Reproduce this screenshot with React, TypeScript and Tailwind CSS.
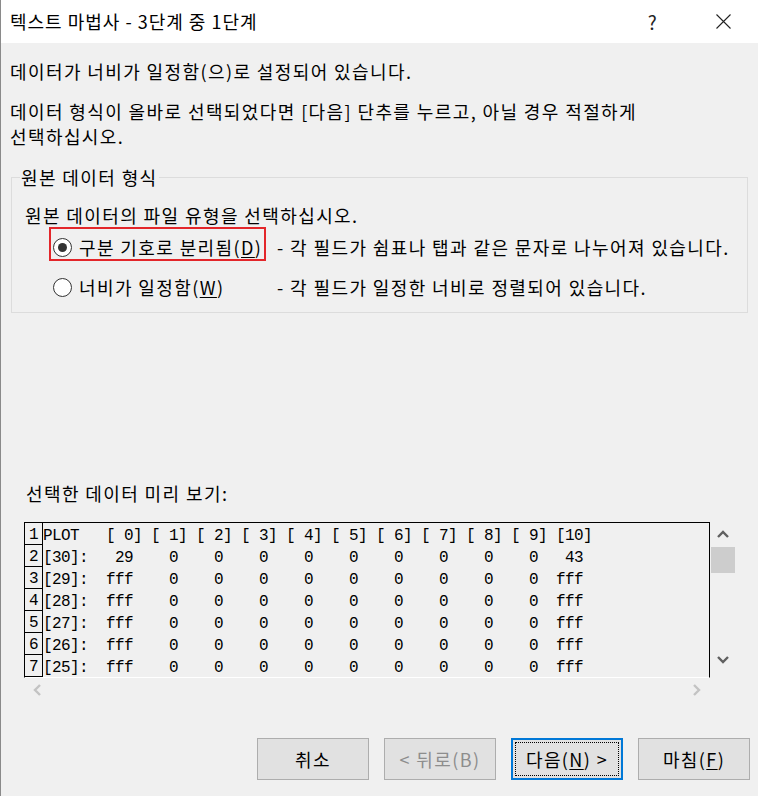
import React from "react";

const zeros = "    0".repeat(9);
const rows = [
  "PLOT   [ 0] [ 1] [ 2] [ 3] [ 4] [ 5] [ 6] [ 7] [ 8] [ 9] [10]",
  "[30]:   29" + zeros + "   43",
  ...[29, 28, 27, 26, 25].map((n) => `[${n}]:  fff` + zeros + "  fff"),
];

function Radio({ checked }: { checked?: boolean }) {
  return (
    <span className="w-[19px] h-[19px] rounded-full border border-[#333] bg-white flex items-center justify-center shrink-0">
      {checked && <span className="w-[9px] h-[9px] rounded-full bg-[#333]" />}
    </span>
  );
}

function Chevron({ dir, color }: { dir: "up" | "down" | "left" | "right"; color: string }) {
  const pts = {
    up: "1,7 6,2 11,7",
    down: "1,2 6,7 11,2",
    left: "7,1 2,6 7,11",
    right: "2,1 7,6 2,11",
  }[dir];
  const vertical = dir === "up" || dir === "down";
  return (
    <svg width={vertical ? 12 : 9} height={vertical ? 9 : 12} viewBox={vertical ? "0 0 12 9" : "0 0 9 12"}>
      <polyline points={pts} fill="none" stroke={color} strokeWidth="2.4" />
    </svg>
  );
}

function Button({ children, primary, disabled }: { children: React.ReactNode; primary?: boolean; disabled?: boolean }) {
  return (
    <div
      className={
        "w-[112px] h-[42px] bg-[#e1e1e1] flex items-center justify-center " +
        (primary ? "border-2 border-[#0078d7] p-[2px]" : "border border-[#adadad]") +
        (disabled ? " text-[#8d8d8d]" : " text-black")
      }
    >
      {primary ? (
        <div className="w-full h-full border border-dotted border-black flex items-center justify-center">{children}</div>
      ) : (
        children
      )}
    </div>
  );
}

export default function App() {
  return (
    <div className="w-[758px] h-[796px] bg-[#f0f0f0] border-l border-[#8a8a8a] flex flex-col overflow-hidden font-['Noto_Sans_CJK_KR',sans-serif] text-[18px] tracking-[1.4px] leading-[25px] text-black">
      {/* Title bar */}
      <div className="h-[43px] bg-white flex items-center pl-[9px] shrink-0">
        <span className="flex-1 tracking-[1px]">텍스트 마법사 - 3단계 중 1단계</span>
        <span className="w-[70px] text-center text-[19px] text-[#222]">?</span>
        <span className="w-[70px] flex justify-center">
          <svg width="15" height="15" viewBox="0 0 15 15">
            <path d="M0.5 0.5 L14.5 14.5 M14.5 0.5 L0.5 14.5" stroke="#222" strokeWidth="1.1" />
          </svg>
        </span>
      </div>

      <div className="pl-[9px] flex flex-col">
        <p className="mt-[16px]">데이터가 너비가 일정함(으)로 설정되어 있습니다.</p>
        <p className="mt-[15px]">
          데이터 형식이 올바로 선택되었다면 [다음] 단추를 누르고, 아닐 경우 적절하게
          <br />
          선택하십시오.
        </p>

        {/* Source data type */}
        <fieldset className="mt-[16px] ml-[1px] mr-[10px] border border-[#dcdcdc] pb-[12px]">
          <legend className="ml-[8px] px-[1px]">원본 데이터 형식</legend>
          <p className="mt-[13px] pl-[13px]">원본 데이터의 파일 유형을 선택하십시오.</p>
          <div className="flex items-center -mt-[1px]">
            <div className="ml-[37px] w-[217px] h-[34px] border-2 border-[#e3262a] pt-[8px] pb-[2px] pl-[2px] flex items-center gap-[7px]">
              <Radio checked />
              <span>
                구분 기호로 분리됨(<span className="underline underline-offset-2">D</span>)
              </span>
            </div>
            <span className="ml-[11px] pt-[6px]">- 각 필드가 쉼표나 탭과 같은 문자로 나누어져 있습니다.</span>
          </div>
          <div className="flex items-center mt-[14px]">
            <div className="ml-[37px] w-[217px] pl-[4px] flex items-center gap-[7px]">
              <Radio />
              <span>
                너비가 일정함(<span className="underline underline-offset-2">W</span>)
              </span>
            </div>
            <span className="ml-[11px]">- 각 필드가 일정한 너비로 정렬되어 있습니다.</span>
          </div>
        </fieldset>

        {/* Preview */}
        <p className="mt-[168px] ml-[16px]">선택한 데이터 미리 보기:</p>
        <div className="mt-[16px] ml-[14px] flex">
          <div className="w-[686px] border border-black border-b-white font-['Liberation_Mono',monospace] text-[16px] tracking-[-0.6px] leading-[22px]">
            {rows.map((r, i) => (
              <div key={i} className="flex h-[22px]">
                <div className="w-[18px] border-r border-b border-black pl-[4px] leading-[25px] shrink-0">{i + 1}</div>
                <div className="whitespace-pre pt-[2px]">{r}</div>
              </div>
            ))}
          </div>
          <div className="ml-[1px] w-[24px] flex flex-col items-center">
            <div className="h-[25px] flex items-center">
              <Chevron dir="up" color="#606060" />
            </div>
            <div className="w-[24px] h-[26px] bg-[#cdcdcd]" />
            <div className="flex-1" />
            <div className="h-[26px] flex items-start pt-[3px]">
              <Chevron dir="down" color="#606060" />
            </div>
          </div>
        </div>
        <div className="ml-[14px] w-[686px] h-[24px] flex items-center justify-between px-[9px]">
          <Chevron dir="left" color="#c3c3c3" />
          <Chevron dir="right" color="#c3c3c3" />
        </div>
      </div>

      {/* Buttons */}
      <div className="mt-[36px] flex justify-end gap-[15px] pr-[8px]">
        <Button>취소</Button>
        <Button disabled>&lt; 뒤로(B)</Button>
        <Button primary>
          다음(<span className="underline underline-offset-2">N</span>) &gt;
        </Button>
        <Button>
          마침(<span className="underline underline-offset-2">F</span>)
        </Button>
      </div>
    </div>
  );
}
